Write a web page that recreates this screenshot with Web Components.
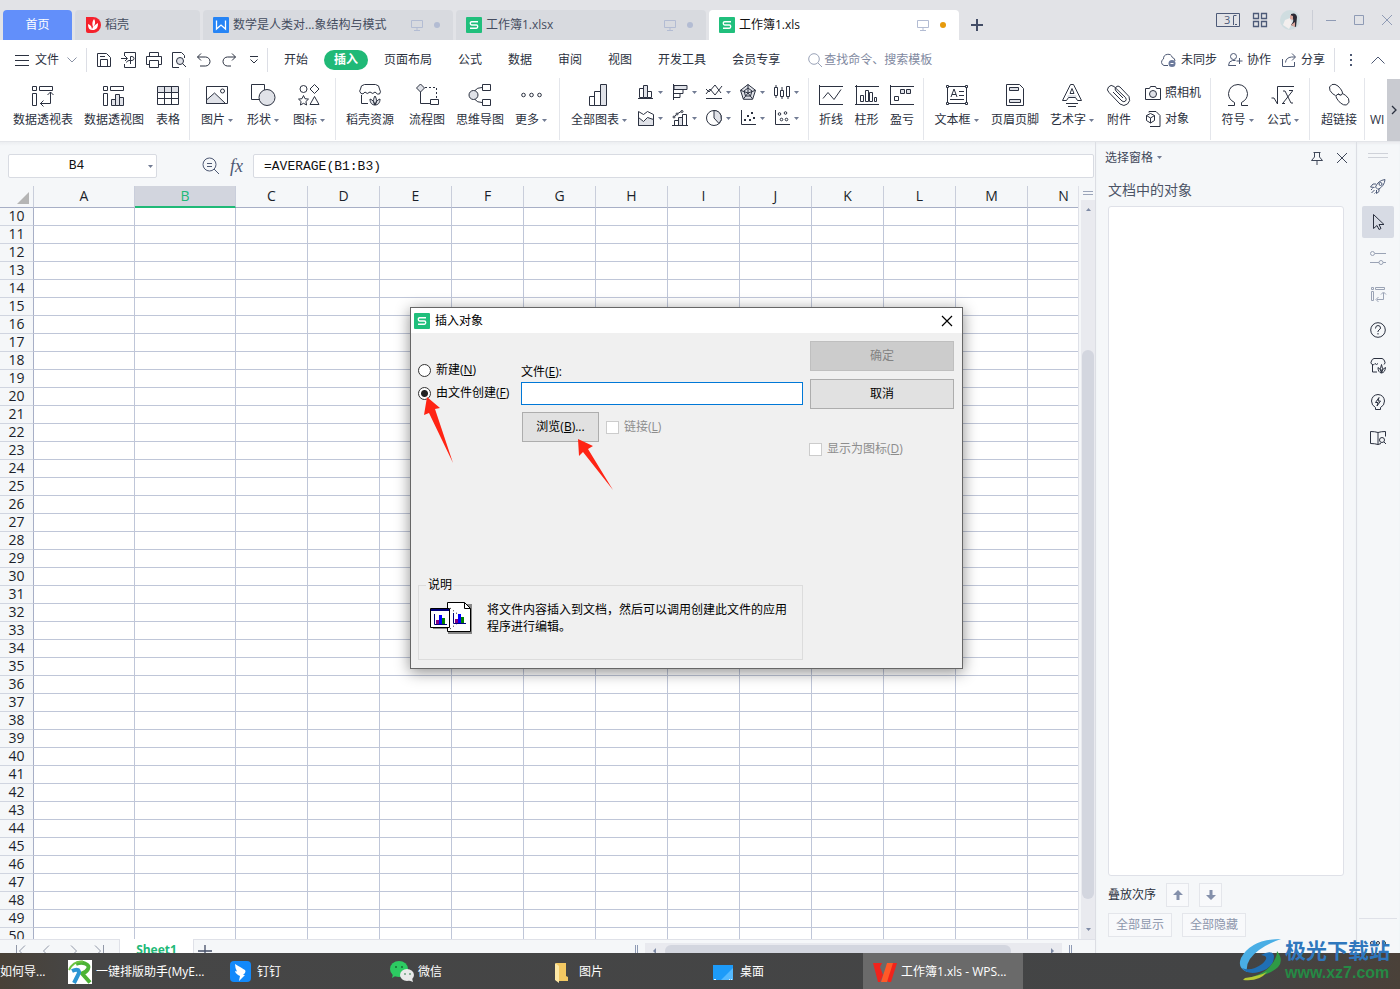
<!DOCTYPE html>
<html lang="zh-CN">
<head>
<meta charset="utf-8">
<title>工作簿1.xls</title>
<style>
html,body{margin:0;height:100%}
body{font:12px/16px "Open Sans","Noto Sans CJK SC",sans-serif;color:#2b3140;overflow:hidden}
</style>
</head>
<body>
<wps-app></wps-app>
<script>
const BASE = `*{box-sizing:border-box}
button,input,fieldset{font:inherit;color:inherit;border:0;background:none;padding:0;margin:0;border-radius:0}
button{white-space:nowrap}input{outline:0;min-width:0}a{color:inherit;text-decoration:none}`;

const define = (name, css, html, setup) => customElements.define(name, class extends HTMLElement {
  connectedCallback() {
    if (this.shadowRoot) return;
    const root = this.attachShadow({ mode: "open" });
    const t = document.createElement("template");
    t.innerHTML = `<style>${BASE}${css}</style>${typeof html === "function" ? html(this) : html}`;
    root.append(t.content.cloneNode(true));
    if (setup) setup(this, root);
  }
});

const G = 'fill="#e0e2e8"';
const SHEET_LOGO = '<rect width="16" height="16" rx="1" fill="#20bf7c" stroke="none"/><path stroke="#fff" stroke-width="1.4" d="M12 4.7H5.6Q4.3 4.7 4.3 6.3T5.6 8h4.8Q11.7 8 11.7 9.6T10.4 11.3H4"/>';
const PIVOT = '<path d="M1.5 3.5h4v4h-4zM8.5 3.5h13v4h-13zM1.5 10.5h4v12h-4z"/>';
const LEAF = '<path fill="#e0e2e8" d="M17 13c2 3 2 6 0 9c-2-3-2-6 0-9zM12 16c3 1 4 3 5 6c-3 0-5-2-5-6zM22 16c-3 1-4 3-5 6c3 0 5-2 5-6z"/>';
const ICONS = {
  caret: [5, 3, '<path fill="#717b93" stroke="none" d="M0 0h5L2.500 3z"/>'],
  docer: [16, 16, '<path fill="#f5222d" stroke="none" d="M1 0h7a8 8 0 010 16H3q-2 0-2-2z"/><path fill="#fff" stroke="none" d="M9 2c2 3 1 6-1 8c-1-3-1-5 1-8zM13 6c0 4-1 6-4 7H7c0-3 3-5 6-7zM3 7c3 1 4 3 4 6c-3 0-4-3-4-6z"/>'],
  word: [16, 16, '<rect width="16" height="16" rx="1" fill="#2684f5" stroke="none"/><path stroke="#fff" stroke-width="1.3" d="M3.500 3.500v8.500l4.500-4l4.500 4V3.500"/>'],
  sheet: [16, 16, SHEET_LOGO],
  monitor: [12, 12, '<path stroke="#b3bcd3" d="M.5 1.500h11v7H.5zM6 8.500v3M3 11.500h6"/>'],
  plus: [12, 12, '<path stroke="#434d66" stroke-width="2" d="M6 0v12M0 6h12"/>'],
  three: [24, 14, '<path stroke="#4d5a78" d="M.5.5h23v13H.5zM17.500 3v9M17.500 2.500h3M19 11.500h2"/>'],
  apps: [16, 16, '<path stroke="#4d5a78" stroke-width="1.3" d="M1.500 1.500h5v5h-5zM9.500 1.500h5v5h-5zM1.500 9.500h5v5h-5zM9.500 9.500h5v5h-5z"/>'],
  avatar: [20, 20, '<circle cx="10" cy="10" r="10" fill="#cfdde0" stroke="none"/><path stroke="none" fill="#f3efee" d="M5 10l5-2l2 5l-3 6l-6-4z"/><path stroke="none" fill="#2a2a35" d="M11 4q5-2 6 3l-1 10l-5-2l2-3q1-4-2-6z"/><path stroke="none" fill="#d9a79c" d="M10 5l3 1v4l-3-1zM11 15l4-3v5z"/>'],
  min: [12, 12, '<path stroke="#8f9bb5" d="M1 6.500h10"/>'],
  max: [12, 12, '<path stroke="#8f9bb5" d="M1.500 1.500h9v9h-9z"/>'],
  x: [12, 12, '<path d="M1 1l10 10M11 1L1 11"/>'],
  burger: [14, 12, '<path d="M0 1.500h14M0 6.500h14M0 11.500h14"/>'],
  chev: [10, 6, '<path stroke="#8a92a5" d="M.5.5L5 5L9.500.5"/>'],
  up: [14, 8, '<path d="M.5 7.500L7 1l6.500 6.500"/>'],
  save: [16, 16, '<path d="M1.500 1.500h9l4 4v9h-13zM4.500 14V7.500h7V14M4 4.500h5"/>'],
  pdf: [16, 16, '<path d="M3.500 4V.5h11v15h-11V12M0 6.500h6M4 4l2.500 2.500L4 9M9.500 12V4.500h1.500q2 .2 2 2t-2 2H8q-2 .2-2.500 2"/>'],
  print: [16, 16, '<path d="M3.500 5V.5h9V5M3.500 12.500H.5v-8h15v8h-3M3.500 8.500h9v7h-9z"/>'],
  preview: [16, 16, '<path d="M8 15.500H1.500V.5h9l3 3V6"/><circle cx="9" cy="9" r="3.500" fill="#e0e2e8"/><path d="M11.500 11.500l3.500 3.500"/>'],
  undo: [14, 14, '<path d="M4 .5L.5 4L4 7.500M.5 4h8a4.500 4.500 0 010 9H3"/>'],
  redo: [14, 14, '<path d="M10 .5L13.500 4L10 7.500M13.500 4h-8a4.500 4.500 0 000 9H9"/>'],
  more: [8, 8, '<path d="M0 .5h8M.5 3.500L4 7l3.500-3.500"/>'],
  search: [14, 14, '<circle cx="6" cy="6" r="5.300"/><path d="M10 10l4 4"/>'],
  cloud: [16, 14, '<path d="M8 12.500H4a3.500 3.500 0 01-.5-6.500a4.500 4.500 0 018.800-1.500A3.500 3.500 0 0115 8"/><circle cx="12" cy="10.500" r="3.500" fill="#6c7a9c" stroke="none"/><path stroke="#fff" d="M10.500 10.500h3"/>'],
  collab: [14, 14, '<circle cx="5.500" cy="3.500" r="3"/><path d="M8 12.500H.5q0-4.500 4-5h3M11.500 5v6M8.500 8h6"/>'],
  share: [14, 14, '<path d="M.5 6v7.500h12V9M3.500 9.500q.5-5 6-5.500h3.500M10 .5L13.500 4L10 7.500"/>'],
  dots: [4, 14, '<path stroke-width="2" d="M1 2h2M1 7h2M1 12h2"/>'],
  pivot: [24, 24, PIVOT + '<path d="M19.500 9v11.500H9M16.500 12l3-3l3 3M12.500 17.500l-3 3l3 3"/>'],
  pivotchart: [24, 24, PIVOT + `<path ${G} d="M9.500 16.500h4v6h-4zM13.500 11.500h4v11h-4zM17.500 14.500h4v8h-4z"/>`],
  table: [24, 24, `<path ${G} d="M1.500 3.500h21v6h-21z"/><path d="M1.500 9.500v12h21v-12M1.500 15.500h21M8.500 3.500v18M15.500 3.500v18"/>`],
  image: [24, 24, `<path d="M1.500 3.500h21v17h-21z"/><path ${G} d="M1.500 17l8-7l11 10.500h-19z"/><circle cx="17.500" cy="8" r="2"/>`],
  shapes: [24, 24, `<path d="M.5 1.500h13v15H.5z" fill="#fff"/><circle cx="16" cy="14.500" r="8" ${G}/>`],
  symbols: [24, 24, '<circle cx="6.500" cy="6" r="3.500"/><path d="M17.500 1.500L22 6l-4.500 4.500L13 6zM17.500 13.500l4.500 8h-9zM6.500 12.500l1.500 3.200l3.500.4l-2.600 2.400l.7 3.500l-3.100-1.700L3.400 22l.7-3.500L1.500 16.100l3.500-.4z"/>'],
  docerres: [24, 24, '<path d="M3 10.500Q.5 8 2.500 6q0-4 4-4.500h11q4 .5 4 4.500q2 3 0 5q-2 1-4.500-2q-2 3-5 0q-3 3-5 0q-2 3-4 1.500M3.500 12v8.500H10"/>' + LEAF],
  flow: [24, 24, `<path ${G} d="M5.500 1l4 4l-4 4l-4-4z"/><path d="M5.500 9v11.500H15M15.500 16.500h8v5h-8z"/><path stroke-dasharray="2 2" d="M10 4.500h11.500V16"/>`],
  mind: [24, 24, `<circle cx="5.500" cy="12" r="4.500" ${G}/><path d="M14.500 1.500h8v6h-8zM14.500 16.500h8v6h-8zM7 7.500q2-3 7-3M7 16.500q2 3 7 3"/>`],
  ellip: [24, 24, '<circle cx="4.500" cy="12" r="1.800"/><circle cx="12.500" cy="12" r="1.800"/><circle cx="20.500" cy="12" r="1.800"/>'],
  smalldots: [16, 6, '<circle cx="2" cy="3" r="1.500"/><circle cx="8" cy="3" r="1.500"/><circle cx="14" cy="3" r="1.500"/>'],
  charts: [24, 24, `<path d="M2.500 13.500h5v9h-5zM7.500 8.500h6v14h-6z"/><path ${G} d="M13.500 1.500h6v21h-6z"/>`],
  bars: [16, 16, `<path d="M1.500 4.500h4v9h-4zM9.500 7.500h4v6h-4z"/><path ${G} d="M5.500 1.500h4v12h-4z"/><path d="M0 14.500h15"/>`],
  hbars: [16, 16, `<path d="M1.500 0v16M2 5.500h9v4H2M2 9.500h6v4H2"/><path ${G} d="M2 1.500h13v4H2z"/>`],
  lines: [16, 16, '<path d="M0 14.500h16M0 10l4-5l5 6l7-9M0 5l3 3l6-7l6 8"/>'],
  radar: [16, 16, `<path ${G} d="M8 .5l7.500 5.800l-2.900 9H3.400l-2.900-9z"/><path d="M8 4l4 3l-1.500 5h-5L4 7zM8 .5V9M.5 6.300L8 9l7.500-2.700M3.400 15L8 9l4.600 6"/>`],
  stock: [16, 16, '<path d="M.5 3.500h3v8h-3zM6.500 6.500h3v6h-3zM12.500 2.500h3v10h-3zM2 1v2M2 12v2M8 3v3M8 13v2M14 13v2"/>'],
  area: [16, 16, `<path d="M.5 15.500V1.500l5 3l4-3l6 3v11z"/><path ${G} d="M.5 7.500l5 4l4-4l6 2v6H.5z"/>`],
  combo: [16, 16, `<path d="M2.500 10.500h4v5h-4z"/><path ${G} d="M6.500 7.500h4v8h-4z"/><path d="M10.500 4.500h4v11h-4zM0 15.500h16M2 7l3-3l5-3"/><g fill="#fff"><circle cx="2" cy="7" r="1"/><circle cx="5" cy="4" r="1"/><circle cx="10" cy="1.500" r="1"/></g>`],
  pie: [16, 16, `<circle cx="8" cy="8" r="7.500"/><path ${G} d="M8 .5V8l5 5.500A7.500 7.500 0 008 .5z"/>`],
  scatter: [16, 16, '<path d="M1.500 0v14.500H16"/><path stroke-width="2" d="M4 10h2M7 6h2M9 10h2M11 3h2M13 8h2"/>'],
  bubble: [16, 16, '<path d="M1.500 0v14.500H16"/><circle cx="5.500" cy="4" r="1.300"/><circle cx="11.500" cy="3" r="1.300"/><circle cx="7.500" cy="9.500" r="1.300"/><circle cx="12.500" cy="9.500" r="1.300"/>'],
  sline: [24, 24, '<path d="M.5 2v20M0 3.500h24M0 21.500h24M4 15.500l5-6l6 7l7-10"/>'],
  scol: [24, 24, '<path d="M1.500 2v20M0 3.500h24M0 21.500h24M5.500 12.500h3v6h-3zM10.500 7.500h3v11h-3zM14.500 9.500h3v9h-3zM19.500 14.500h2v4h-2z"/>'],
  swin: [24, 24, `<path d="M.5 2v20M0 3.500h24M0 21.500h24M4.500 13.500h4v4h-4z"/><path ${G} d="M10.500 6.500h4v4h-4zM16.500 6.500h4v4h-4z"/>`],
  textbox: [24, 24, '<path d="M2.500 3.500h19v17h-19zM5 16.500h14M14 8.500h5M14 12.500h5M6 14l3-8l3 8M7 11.500h4"/><path fill="#fff" d="M1.500 2.500h2v2h-2zM20.500 2.500h2v2h-2zM1.500 19.500h2v2h-2zM20.500 19.500h2v2h-2z"/>'],
  header: [24, 24, `<path d="M3.500 1.500h13l4 4v17h-17z"/><path ${G} d="M6.500 4.500h9v3h-9zM6.500 16.500h11v3h-11z"/>`],
  wordart: [24, 24, `<path d="M2.500 17.500l8-16h3l8 16h-4l-2-3h-7l-2 3zM10 10.500h4l-2-5zM6 20.500h12M8 23.500h8"/><path ${G} stroke="none" d="M8 12h8l1 2H7z"/>`],
  clip: [24, 24, '<path d="M6 9l9 9q2 1.500 3.500 0t0-3.500L7 3.500Q4 1 1.500 4t.5 5.500l11 11.500q4 3 7.500 0t1.500-7.500L13 4q-2-2-4 0t0 4l7 7"/>'],
  camera: [16, 16, `<path d="M.5 3.500h4l1-2h5l1 2h4v11H.5z"/><circle cx="8" cy="9" r="3.500" ${G}/>`],
  object: [16, 16, '<path d="M4 1.500V.5h7l4 4v11H5"/><path d="M5.500 2.500l4 2v5l-4 2.500l-4-2.500v-5zM1.500 4.500l4 2.500l4-2.500M5.500 7v5"/>'],
  omega: [24, 24, '<path d="M2 22.500h6.500v-3Q2.500 16.500 2.500 10.500Q3.500 2 12 1.500Q20.500 2 21.500 10.500q0 6-6 9v3H22"/>'],
  root: [24, 24, '<path d="M.5 15h2.500l3.500 6V3.500H23M12 8h2l6 12h2M21.500 8L12 20M11 20.500h3M18 7.500h4"/>'],
  link: [24, 24, '<path d="M8.500 12.500q-3-1-5.500-5q-2-4 2-6q3-1 6 1.500q6 6 4 8.500q-1.500 1.500-4-.5M15.500 10.500q3 1 6 5q2 4-2 6.500q-3 .5-6-2q-6-6-4-8q2-2 4 0"/>'],
  zoomout: [18, 18, '<circle cx="7.500" cy="7.500" r="6.500"/><path d="M12 12l5 5M5 6.500h5M5 9.500h5"/>'],
  pin: [14, 14, '<path d="M3.500 1.500h7M4.500 1.500V6L1.500 9.500h11l-3-3.500V1.500M7 9.500V14"/>'],
  rocket: [16, 16, '<path d="M5.500 9Q8 2.500 15 1.500Q14.500 8 8 11.500zM6 6H3L.5 9l4 .5M9 10.500v3L6.500 15.500L6.500 12M1 12l1.500-1.500M1.500 15l3-3M4.500 15.500l1-1"/><circle cx="10.500" cy="6" r="1.500"/>'],
  cursor: [16, 16, '<path d="M3.500.5v14l3.500-3l2 4l2-1l-2-4h5z"/>'],
  sliders: [16, 16, '<path d="M5 3.500h11M0 12.500h9M13 12.500h3"/><circle cx="2.500" cy="3.500" r="2"/><circle cx="11" cy="12.500" r="2"/>'],
  spivot: [16, 16, '<path d="M1.500 1.500h2v2h-2zM5.500 1.500h9v2h-9zM1.500 5.500h2v9h-2zM13.500 7v6.500H7M11 8.500L13.500 6L16 8.500M8.500 11L6 13.500L8.500 16"/>'],
  help: [16, 16, '<circle cx="8" cy="8" r="7.300"/><path d="M5.500 6.500q0-3 2.500-3t2.500 2.500q0 1-1.500 2t-1 2M8 11v1.500"/>'],
  sdocer: [16, 16, '<path d="M2 6.500Q0 5 1.500 3Q2 1 4 .500h8Q14 1 14.500 3Q16 5 14 6.500M2 6.500q2 1 3-1q1.500 2 3 0M2.500 7v7H7"/><path d="M11.500 6.500q2 4 0 8q-2-4 0-8zM8 9.500q0 5 3.500 5.500Q15 14.500 15.500 9.500q-3 1-4 5q-1-4-3.500-5z"/>'],
  bulb: [16, 16, '<path d="M5.500 13.500q-4-2-4-6.500Q2 1 8 .500Q14 1 14.500 7q0 4.500-4 6.500v2h-5zM9 3.500L5.500 8.500H8L7 12l3.500-5H8z"/>'],
  book: [16, 16, '<path d="M8 2.500q-3-1-7.500-1v12q4.500 0 7.500 1zM8 2.500q3-1 7.500-1v5M8 14.500l3-1"/><circle cx="12" cy="10" r="2.500"/><path d="M14 12l2 2"/>'],
  arrowup: [10, 10, '<path fill="#8490ab" stroke="none" d="M5 0l5 5H6.500v5h-3V5H0z"/>'],
  arrowdown: [10, 10, '<path fill="#8490ab" stroke="none" d="M5 10l5-5H6.500V0h-3v5H0z"/>'],
  first: [12, 12, '<path d="M1.500 0v12M10 .5L4.500 6l5.500 5.500"/>'],
  prev: [12, 12, '<path d="M8 .5L2.500 6L8 11.500"/>'],
  next: [12, 12, '<path d="M4 .5L9.500 6L4 11.500"/>'],
  last: [12, 12, '<path d="M10.500 0v12M2 .5L7.500 6L2 11.500"/>'],
  add: [14, 12, '<path stroke="#434d66" stroke-width="1.300" d="M7 0v12M0 6h14"/>'],
  right: [6, 10, '<path stroke-width="1.300" d="M1 1l4 4l-4 4"/>'],
  trup: [5, 3, '<path fill="#7f8ba6" stroke="none" d="M0 3h5L2.500 0z"/>'],
  trleft: [3, 6, '<path fill="#7f8ba6" stroke="none" d="M3 0v6L0 3z"/>'],
  trright: [3, 6, '<path fill="#7f8ba6" stroke="none" d="M0 0v6l3-3z"/>'],
  closex: [12, 12, '<path stroke="#000" stroke-width="1.200" d="M1 1l10 10M11 1L1 11"/>'],
  objects: [42, 34, '<path stroke="none" fill="#888" d="M3 9h18v19H3zM18 3h24v30H18z"/><path fill="#fff" stroke="#000" d="M17.500 1.500h17l6 6v23h-23z"/><path stroke="#000" d="M34.500 1.500v6h6"/><path stroke="#000" stroke-dasharray="1 3" d="M20 7l10 8M20 28l10-8"/><path fill="#fff" stroke="#000" d="M.5 7.500h19v19H.5z"/><path stroke="none" fill="#00007b" d="M1 8h18v2H1z"/><path stroke="#00007b" d="M4.500 13v10.500H17M23.500 12v10.500H36"/><path stroke="none" fill="#840084" d="M6 19h3v4H6zM25 18h3v4h-3z"/><path stroke="none" fill="#00f" d="M9 14h3v9H9zM28 13h3v9h-3z"/><path stroke="none" fill="#008200" d="M12 17h3v6h-3zM31 16h3v6h-3z"/>'],
  typeset: [24, 24, '<path fill="#fff" stroke="none" d="M0 0h24v24H0z"/><path stroke="#4cb335" stroke-width="4" d="M8 4Q13 2 17 3.500q5 2 3 5.500t-6 4.500l8 9"/><path stroke="#2c95d3" stroke-width="4" d="M4 11q4-2 6-1q2 2 0 5L6 23"/><path stroke="#6cc443" stroke-width="2" d="M1 10Q5 1 15 1.500"/>'],
  ding: [24, 24, '<rect x="1" y="1" width="21" height="21" rx="4" fill="#1289fb" stroke="none"/><path fill="#fff" stroke="none" d="M6 4q7 4 10 6q1 1 0 3l-2 2h2l-6 6l1-5l-2-1q-3-2-3-4l2 .5Q6 8 6 4z"/>'],
  wechat: [24, 24, '<ellipse cx="9" cy="9" rx="9" ry="8" fill="#2dcb62" stroke="none"/><path fill="#2dcb62" stroke="none" d="M3 14l-1 4l5-3z"/><ellipse cx="17" cy="15" rx="7" ry="6" fill="#e9e9e9" stroke="none"/><path fill="#e9e9e9" stroke="none" d="M18 20l5 2l-1-4z"/><g fill="#176b35" stroke="none"><circle cx="6" cy="7" r="1"/><circle cx="12" cy="7" r="1"/><circle cx="15" cy="14" r=".8"/><circle cx="20" cy="14" r=".8"/></g>'],
  folder: [24, 24, '<path fill="#f3c862" stroke="none" d="M5 3h10v13l2 1v4H5z"/><path fill="#fde8a6" stroke="none" d="M4 3l4 3v17l-4-3z"/>'],
  desktop: [24, 24, '<path fill="#1d9bf9" stroke="none" d="M1 5h20v15H1z"/><path fill="#54b9ff" stroke="none" d="M21 8v12H9z"/><path stroke="#dff1ff" d="M2 19.500h2M17 19.500h1M19 19.500h1"/>'],
  wps: [24, 24, '<path fill="#f0231c" stroke="none" d="M0 3h9l-2 4l3 8l-3 7H5zM24 3l-6 19h-3l-2-5l4-14z"/><path fill="#ff5a28" stroke="none" d="M14 3h6l-6 19H8z"/>']
};

define("ui-icon", `:host{display:block;flex:none}svg{display:block;overflow:visible}`, el => {
  const [w, h, body] = ICONS[el.getAttribute("name")];
  return `<svg width="${w}" height="${h}" viewBox="0 0 ${w} ${h}" fill="none" stroke="currentColor" aria-hidden="true">${body}</svg>`;
});

/* ---------- window title bar ---------- */
define("doc-tab", `:host{display:block;width:250px;height:30px;background:#d8dadf;border-radius:4px 4px 0 0;color:#454d60}
:host([short]){width:125px}:host([home]){width:69px;background:#628ffa;color:#fff}:host([active]){background:#fff;color:#111}
button{width:100%;height:100%;display:flex;align-items:center;gap:4px;padding:0 13px 0 10px}
:host([home]) button{justify-content:center;padding:0}
.t{flex:1;text-align:left}:host([home]) .t{flex:none}
.d{width:6px;height:6px;border-radius:3px;background:#b3bcd3;margin-left:7px}:host([active]) .d{background:#e69a0c}`,
  el => `<button type="button">${el.hasAttribute("icon") ? `<ui-icon name="${el.getAttribute("icon")}"></ui-icon>` : ""}<span class="t"><slot></slot></span>${el.hasAttribute("doc") ? '<ui-icon name="monitor"></ui-icon><span class="d"></span>' : ""}</button>`);

define("title-bar", `:host{display:flex;height:40px;background:#e2e3e7;padding:0 7px 0 3px;justify-content:space-between}
nav{display:flex;gap:3px;align-items:flex-end}.add{width:30px;height:30px;display:grid;place-items:center}
.r{display:flex;align-items:center;height:40px;color:#8f9bb5}
.r>*{margin-left:12px}.three{position:relative;color:#4d5a78;font-size:11px}.three span{position:absolute;left:8px;top:-1px}
i{width:1px;height:20px;background:#cbced6}.win{display:flex;gap:16px}`,
`<nav><doc-tab home>首页</doc-tab><doc-tab short icon="docer">稻壳</doc-tab><doc-tab doc icon="word">数学是人类对...象结构与模式</doc-tab><doc-tab doc icon="sheet">工作簿1.xlsx</doc-tab><doc-tab doc active icon="sheet">工作簿1.xls</doc-tab><button class="add" type="button" aria-label="新建"><ui-icon name="plus"></ui-icon></button></nav>
<div class="r"><button class="three" type="button"><ui-icon name="three"></ui-icon><span>3</span></button><button type="button" aria-label="应用"><ui-icon name="apps"></ui-icon></button><button type="button" aria-label="账户"><ui-icon name="avatar"></ui-icon></button><i></i><div class="win"><button type="button" aria-label="最小化"><ui-icon name="min"></ui-icon></button><button type="button" aria-label="最大化"><ui-icon name="max"></ui-icon></button><button type="button" aria-label="关闭"><ui-icon name="x"></ui-icon></button></div></div>`);

/* ---------- menu row ---------- */
const qa = ["save", "pdf", "print", "preview", "undo", "redo", "more"].map(n => `<button type="button" aria-label="${n}"><ui-icon name="${n}"></ui-icon></button>`).join("");
const menus = ["开始", "插入", "页面布局", "公式", "数据", "审阅", "视图", "开发工具", "会员专享"].map(n => `<a href="#"${n === "插入" ? ' class="on"' : ""}>${n}</a>`).join("");
define("menu-bar", `:host{display:flex;height:38px;background:#fff;align-items:center;padding:1px 15px 0}
i{width:1px;height:24px;background:#dcdee5}
.file{display:flex;align-items:center;gap:6px;width:71px}.file ui-icon:last-child{margin-left:2px}
.qa{display:flex;padding:0 0 0 4px;width:180px}.qa button{width:25px;display:grid;place-items:center}
nav{display:flex;align-items:center;margin-left:3px}nav a{padding:0 13px;white-space:nowrap}nav a.on{margin:0 3px;padding:2px 10px;background:#20b977;color:#fff;font-weight:bold;border-radius:10px}
.s{display:flex;align-items:center;gap:2px;margin-left:15px;color:#9aa3b8;flex:1}.s input{width:130px}.s input::placeholder{color:#7f899f;opacity:1}
.r,.c{display:flex;align-items:center;gap:9px}.c{gap:11px}.r button{display:flex;align-items:center;gap:5px}.r ui-icon{color:#4d5873}.end{margin:0 9px 0 5px}`,
`<button type="button" class="file"><ui-icon name="burger"></ui-icon>文件<ui-icon name="chev"></ui-icon></button><i></i><div class="qa">${qa}</div><i></i><nav>${menus}</nav><label class="s"><ui-icon name="search"></ui-icon><input type="text" placeholder="查找命令、搜索模板"></label>
<div class="r"><div class="c"><button type="button"><ui-icon name="cloud"></ui-icon>未同步</button><button type="button"><ui-icon name="collab"></ui-icon>协作</button><button type="button"><ui-icon name="share"></ui-icon>分享</button></div><i></i><button type="button" class="end" aria-label="更多"><ui-icon name="dots"></ui-icon></button><button type="button" aria-label="折叠"><ui-icon name="up"></ui-icon></button></div>`);

/* ---------- ribbon ---------- */
define("ribbon-btn", `:host{display:block;flex:none}button{width:100%;display:flex;flex-direction:column;align-items:center;padding-top:5px;gap:5px}
span{display:flex;align-items:center;gap:3px}`,
  el => `<button type="button"><ui-icon name="${el.getAttribute("icon")}"></ui-icon><span><slot></slot>${el.hasAttribute("menu") ? '<ui-icon name="caret"></ui-icon>' : ""}</span></button>`,
  el => { el.style.width = el.getAttribute("w") + "px"; });
define("ribbon-group", `:host{display:flex;flex:none;height:62px;border-right:1px solid #e4e6eb;padding:0 3px 0 4px}:host([tight]){padding-right:0}`, `<slot></slot>`);
const B = (icon, label, w, menu) => `<ribbon-btn icon="${icon}" w="${w}"${menu ? " menu" : ""}>${label}</ribbon-btn>`;
const mini = ["bars", "hbars", "lines", "radar", "stock", "area", "combo", "pie", "scatter", "bubble"].map(n => `<button type="button" aria-label="${n}"><ui-icon name="${n}"></ui-icon><ui-icon name="caret"></ui-icon></button>`).join("");
define("ribbon-bar", `:host{display:flex;height:64px;background:#fff;padding-left:4px;border-bottom:1px solid #e3e5e9}
.g{flex:1;display:flex;overflow:hidden;min-width:0}
.mini{display:grid;grid-template-columns:repeat(5,34px);grid-template-rows:26px 26px;padding:1px 0 0 4px}.mini button{display:flex;align-items:center;gap:4px}
.st{display:grid;grid-template-rows:26px 26px;padding:2px 6px 0}.st button{display:flex;align-items:center;gap:4px}
.wi{padding:34px 0 0 5px}.go{width:13px;background:#c9cbd1;display:grid;place-items:center;margin-top:1px}`,
`<div class="g"><ribbon-group>${B("pivot", "数据透视表", 70)}${B("pivotchart", "数据透视图", 72)}${B("table", "表格", 36)}</ribbon-group>
<ribbon-group>${B("image", "图片", 46, 1)}${B("shapes", "形状", 46, 1)}${B("symbols", "图标", 46, 1)}</ribbon-group>
<ribbon-group>${B("docerres", "稻壳资源", 60)}${B("flow", "流程图", 54)}${B("mind", "思维导图", 52)}${B("ellip", "更多", 50, 1)}</ribbon-group>
<ribbon-group tight>${B("charts", "全部图表", 70, 1)}<div class="mini">${mini}</div></ribbon-group>
<ribbon-group>${B("sline", "折线", 36)}${B("scol", "柱形", 35)}${B("swin", "盈亏", 36)}</ribbon-group>
<ribbon-group>${B("textbox", "文本框", 57, 1)}${B("header", "页眉页脚", 60)}${B("wordart", "艺术字", 54, 1)}${B("clip", "附件", 40)}<div class="st"><button type="button"><ui-icon name="camera"></ui-icon>照相机</button><button type="button"><ui-icon name="object"></ui-icon>对象</button></div></ribbon-group>
<ribbon-group>${B("omega", "符号", 45, 1)}${B("root", "公式", 46, 1)}</ribbon-group>
<ribbon-group tight>${B("link", "超链接", 50)}</ribbon-group><span class="wi">WI</span></div><button class="go" type="button" aria-label="向右滚动"><ui-icon name="right"></ui-icon></button>`);

/* ---------- formula bar ---------- */
define("formula-bar", `:host{display:flex;height:44px;padding:12px 1px 8px 8px;background:linear-gradient(#eceef1,#f5f7f9 4px);color:#4d5873;align-items:center}
.n{display:flex;align-items:center;width:149px;height:24px;border:1px solid #d8dbe2;border-radius:2px;background:#fff;padding-right:3px}
input{font-family:"Liberation Mono",monospace;font-size:13px;color:#111}.n input{flex:1;text-align:center;padding-right:4px}
.z{margin-left:45px}.fx{font:italic 18px/20px "Liberation Serif",serif;width:33px;text-align:center}
.f{flex:1;height:24px;border:1px solid #d8dbe2;border-radius:2px;background:#fff;padding:0 10px}`,
`<label class="n"><input type="text" value="B4" aria-label="名称框"><ui-icon name="caret"></ui-icon></label><button class="z" type="button" aria-label="缩小"><ui-icon name="zoomout"></ui-icon></button><button class="fx" type="button">fx</button><input class="f" type="text" value="=AVERAGE(B1:B3)" aria-label="编辑栏">`);

/* ---------- worksheet ---------- */
const COLS = "ABCDEFGHIJKLMN".split("");
const rows = Array.from({ length: 41 }, (_, i) => `<tr><th scope="row">${i + 10}</th>${"<td></td>".repeat(14)}</tr>`).join("");
define("sheet-grid", `:host{display:flex;flex:1;min-height:0;background:#f5f7f9}
.v{flex:1;overflow:hidden;min-width:0;border-right:1px solid #dfe1e8;background:#fff}
table{border-collapse:separate;border-spacing:0;table-layout:fixed;width:1100px;font-size:14px;color:#1b1f2a}
th{font-weight:normal;padding:0;background:#f5f7f9;border-right:1px solid #c9cedb;line-height:16px;text-align:center;vertical-align:top}
thead th{height:22px;padding-top:2px;border-bottom:1px solid #a7afc6}thead th.on{background:#d2d5de;color:#20b977;border-bottom:2px solid #20b977}
tbody th{border-right-color:#a7afc6;border-bottom:1px solid #d0d5e0}
td{height:18px;padding:0;border-right:1px solid #bfc6d8;border-bottom:1px solid #bfc6d8}
.c svg{display:block;margin:4px 4px 0 auto}
.sb{width:16px;display:flex;flex-direction:column;padding-left:2px}
.sp{height:14px;display:grid;place-items:center}.sp span{width:10px;height:4px;border:solid #9ba5ba;border-width:1px 0}
.tr{flex:1;background:#e9eaef;display:flex;flex-direction:column;align-items:center;padding:8px 0}
.th{width:12px;height:76%;border-radius:6px;background:#d3d6df;margin-top:auto;margin-bottom:29px}.dn{transform:rotate(180deg)}`,
`<div class="v"><table><colgroup><col style="width:34px"><col style="width:101px"><col style="width:101px">${'<col style="width:72px">'.repeat(12)}</colgroup><thead><tr><th class="c"><svg width="12" height="12"><path fill="#b5b5b5" d="M12 0v12H0z"/></svg></th>${COLS.map(c => `<th scope="col"${c === "B" ? ' class="on"' : ""}>${c}</th>`).join("")}</tr></thead><tbody>${rows}</tbody></table></div>
<div class="sb"><div class="sp"><span></span></div><div class="tr"><ui-icon name="trup"></ui-icon><div class="th"></div><ui-icon class="dn" name="trup"></ui-icon></div></div>`);

define("sheet-tabs", `:host{display:block;height:14px;overflow:hidden;background:#f5f7f9;color:#9198a8}
.row{display:flex;height:22px}.nav{display:flex;gap:14px;padding-left:15px;width:120px;align-items:center;border:solid #dfe1e8;border-width:1px 1px 0 0}
.tab{width:73px;background:#fff;color:#20b977;font-weight:bold}
.plus{flex:1;display:flex;align-items:center;padding-left:4px;border:solid #dfe1e8;border-width:1px 0 0 1px}
.h{width:460px;display:flex;align-items:center;border-top:1px solid #dfe1e8;gap:7px}.g{width:3px;height:12px;border:solid #8f9bb5;border-width:0 1px}
.t{flex:1;height:16px;display:flex;align-items:center;justify-content:space-between;background:#e9eaef;padding:0 8px}.t div{width:346px;height:12px;border-radius:6px;background:#d3d6df;margin-right:32px}.end{margin-right:23px}`,
`<div class="row"><div class="nav"><ui-icon name="first"></ui-icon><ui-icon name="prev"></ui-icon><ui-icon name="next"></ui-icon><ui-icon name="last"></ui-icon></div><button class="tab" type="button">Sheet1</button><div class="plus"><ui-icon name="add"></ui-icon></div><div class="h"><span class="g"></span><div class="t"><ui-icon name="trleft"></ui-icon><div></div><ui-icon name="trright"></ui-icon></div><span class="g end"></span></div></div>`);

/* ---------- selection pane and tool strip ---------- */
define("selection-pane", `:host{display:flex;flex-direction:column;width:261px;flex:none;background:#f5f7f9;border-left:1px solid #dcdee4;padding:0 12px 16px;box-shadow:inset 0 2px 2px #eceef1}
header{display:flex;align-items:center;height:31px;margin:0 -4px 0 -3px;color:#3f4759}header button:first-child{display:flex;align-items:center;gap:4px;margin-right:auto}header .x{margin-left:12px}
h2{font-size:14px;line-height:20px;font-weight:normal;margin:7px 0 6px;color:#4b5366}
.l{flex:1;background:#fff;border:1px solid #dfe1e8;border-radius:3px}
.o{display:flex;align-items:center;gap:10px;margin-top:7px;height:24px}.b{border:1px solid #e4e6eb;height:24px;background:#f8f9fb;color:#8d96ab;display:grid;place-items:center}
.sq{width:23px}.w{width:64px}.o+.o{margin-top:6px}`,
`<header><button type="button">选择窗格 <ui-icon name="caret"></ui-icon></button><button type="button" aria-label="固定"><ui-icon name="pin"></ui-icon></button><button class="x" type="button" aria-label="关闭"><ui-icon name="x"></ui-icon></button></header><h2>文档中的对象</h2><div class="l"></div>
<div class="o">叠放次序<button class="b sq" type="button" aria-label="上移"><ui-icon name="arrowup"></ui-icon></button><button class="b sq" type="button" aria-label="下移"><ui-icon name="arrowdown"></ui-icon></button></div><div class="o"><button class="b w" type="button">全部显示</button><button class="b w" type="button">全部隐藏</button></div>`);

define("tool-strip", `:host{display:flex;flex-direction:column;align-items:center;width:44px;flex:none;background:#f5f7f9;border-left:1px solid #dcdee4;padding:11px 2px 7px 0;color:#2b3140;box-shadow:inset 0 2px 2px #eceef1;box-sizing:border-box}
.h{width:20px;height:5px;border:solid #cfd2d9;border-width:1px 0;margin-bottom:12px}
button{width:32px;height:32px;margin-bottom:4px;display:grid;place-items:center;border-radius:2px}.on{background:#d7dbe4}.dim{color:#9aa3b5}.mid{color:#4d5a78}
hr{width:38px;border:0;border-top:1px solid #dfe1e8;margin:auto 0 21px}`,
`<div class="h"></div>${[["rocket", "mid"], ["cursor", "on"], ["sliders", "dim"], ["spivot", "dim"], ["help", ""], ["sdocer", ""], ["bulb", ""], ["book", ""]].map(([n, c]) => `<button type="button" class="${c}" aria-label="${n}"><ui-icon name="${n}"></ui-icon></button>`).join("")}<hr><ui-icon name="smalldots"></ui-icon>`);

/* ---------- insert object dialog ---------- */
define("insert-dialog", `:host{display:block;position:absolute;left:410px;top:307px;width:553px;background:#f0f0f0;border:1px solid #666;box-shadow:0 3px 14px rgba(0,0,0,.45);color:#000;box-sizing:border-box}
header{display:flex;align-items:center;gap:5px;height:25px;background:#fff;padding:0 9px 0 3px}header button{margin-left:auto}
form{display:grid;grid-template-columns:103px 282px 144px;padding:8px 8px 8px 7px;grid-template-rows:236px 83px}
label{display:flex;align-items:center;gap:5px}.k{padding-top:21px;display:grid;gap:7px;align-content:start}
input[type=radio]{appearance:none;width:13px;height:13px;border:1px solid #333;border-radius:50%;background:#fff}input[type=radio]:checked{background:radial-gradient(#222 3px,#fff 4px)}
input[type=checkbox]{appearance:none;width:13px;height:13px;border:1px solid #ccc;background:#fff}
.f{padding-top:23px}.f>input{display:block;width:100%;height:23px;border:1px solid #0078d7;background:#fff;padding:0 4px;margin-top:2px}.f>div{display:flex;gap:7px;margin:7px 0 0 1px}
.btn{height:30px;border:1px solid #adadad;background:#e1e1e1;width:100%}.f .btn{width:77px}.btn:disabled{background:#ccc;border-color:#bfbfbf;color:#838383}
.dis{color:#8d8d8d}.a{display:grid;gap:8px;align-content:start;width:144px;margin-left:7px}.a label{margin:24px 0 0 -1px}
fieldset{grid-column:1/3;border:1px solid #dcdcdc;display:flex;gap:15px;padding:8px 11px}legend{padding:0 2px;margin-left:-4px;line-height:16px}
p{margin:0;line-height:17px;flex:none;width:304px}`,
`<header><ui-icon name="sheet"></ui-icon>插入对象<button type="button" aria-label="关闭"><ui-icon name="closex"></ui-icon></button></header>
<form><div class="k"><label><input type="radio" name="k"><span>新建(<u>N</u>)</span></label><label><input type="radio" name="k" checked><span>由文件创建(<u>F</u>)</span></label></div>
<div class="f"><label for="p"><span>文件(<u>E</u>):</span></label><input id="p" type="text"><div><button type="button" class="btn">浏览(<u>B</u>)...</button><label class="dis"><input type="checkbox" disabled><span>链接(<u>L</u>)</span></label></div></div>
<div class="a"><button class="btn" type="button" disabled>确定</button><button class="btn" type="button">取消</button><label class="dis"><input type="checkbox" disabled><span>显示为图标(<u>D</u>)</span></label></div>
<fieldset><legend>说明</legend><ui-icon name="objects"></ui-icon><p>将文件内容插入到文档，然后可以调用创建此文件的应用程序进行编辑。</p></fieldset></form>`);

/* red pointers drawn over the dialog */
define("pointer-marks", `:host{position:absolute;left:420px;top:396px;pointer-events:none}svg{display:block}`,
`<svg width="200" height="100" fill="#ff2414"><path d="M7 1L20 12L15 13L33 67L9 17L4 19z"/><path d="M158 43L173 50L168 53L193 94L163 56L159 60z"/></svg>`);

/* ---------- task bar ---------- */
define("task-bar", `:host{display:flex;gap:1px;height:36px;background:linear-gradient(90deg,#494137,#464646 80px,#434445 1240px,#4a4139);color:#fff;flex:none}
button{width:160px;height:36px;display:flex;align-items:center;gap:4px;padding:2px 0 0 10px}.cut{width:57px;padding-left:0}.on{background:#6a6a6a}`,
`<button type="button" class="cut">如何导...</button>` + [["typeset", "一键排版助手(MyE..."], ["ding", "钉钉"], ["wechat", "微信"], ["folder", "图片"], ["desktop", "桌面"], ["wps", "工作簿1.xls - WPS..."]].map(([i, t]) => `<button type="button"${i === "wps" ? ' class="on"' : ""}><ui-icon name="${i}"></ui-icon>${t}</button>`).join(""));

define("site-mark", `:host{position:absolute;right:10px;bottom:6px;display:flex;align-items:center;pointer-events:none;white-space:nowrap}
b{display:block;font-size:21px;line-height:26px;color:#2f77bd}span{display:block;font:bold 16px/20px "Liberation Sans",sans-serif;color:#258a45}svg{flex:none}`,
`<svg width="46" height="44" fill="none"><path fill="#49aee5" d="M42 1Q12 1 2 20Q-2 30 8 34Q6 22 20 12Q30 5 42 1z"/><path fill="#1f6fb5" d="M3 30Q12 34 23 26Q32 18 22 17Q33 11 35 18Q35 30 20 34Q8 37 3 30z"/><path fill="#2f9a45" d="M38 13Q48 26 32 34Q22 39 6 41Q26 36 32 27Q38 20 38 13z"/><path fill="#b7c934" d="M6 40Q20 38 28 34Q20 44 4 42z"/></svg><div><b>极光下载站</b><span>www.xz7.com</span></div>`);

define("wps-app", `:host{display:flex;flex-direction:column;height:100vh;position:relative;overflow:hidden}
main{flex:1;display:flex;min-height:0}.ws{flex:1;display:flex;flex-direction:column;min-width:0}title-bar,menu-bar,ribbon-bar{flex:none}`,
`<title-bar></title-bar><menu-bar></menu-bar><ribbon-bar></ribbon-bar><main><div class="ws"><formula-bar></formula-bar><sheet-grid></sheet-grid><sheet-tabs></sheet-tabs></div><selection-pane></selection-pane><tool-strip></tool-strip></main><task-bar></task-bar><insert-dialog></insert-dialog><pointer-marks></pointer-marks><site-mark></site-mark>`);
</script>
</body>
</html>
